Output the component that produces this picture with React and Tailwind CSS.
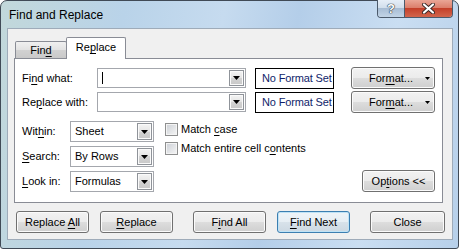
import React from "react";

const font = { fontFamily: '"Liberation Sans", Arial, sans-serif' };

const btn =
  "flex h-[22px] items-center justify-center rounded-[3px] border border-[#707070] bg-[linear-gradient(to_bottom,#f2f2f2_0%,#ebebeb_50%,#dddddd_50%,#cfcfcf_100%)] shadow-[inset_0_0_0_1px_#fbfbfb] text-[11px] text-black";

function U({ children }) {
  return <span className="underline decoration-1 underline-offset-[2px]">{children}</span>;
}

function Arrow() {
  return (
    <svg width="7" height="4" viewBox="0 0 7 4">
      <polygon points="0,0 7,0 3.5,4" fill="#000" />
    </svg>
  );
}

function DropBtn() {
  return (
    <div className="flex w-[15px] items-center justify-center border border-[#8f9399] bg-[linear-gradient(to_bottom,#f4f4f4_0%,#e4e4e4_50%,#d3d3d3_50%,#c8c8c8_100%)] shadow-[inset_0_0_0_1px_#fafafa]">
      <Arrow />
    </div>
  );
}

function Combo({ value }) {
  return (
    <div className="flex h-[21px] w-[84px] border border-[#a4a7ad] bg-white p-px">
      <div className="flex flex-1 items-center pl-[3px] text-[11px]">{value}</div>
      <DropBtn />
    </div>
  );
}

function TextCombo({ caret }) {
  return (
    <div className="flex h-[20px] w-[149px] border border-[#a4a7ad] bg-white p-px">
      <div className="flex flex-1 items-center pl-[3px]">
        {caret && <div className="h-[12px] w-px bg-black" />}
      </div>
      <DropBtn />
    </div>
  );
}

function NoFormat() {
  return (
    <div className="ml-[9px] flex h-[21px] w-[79px] items-center overflow-hidden whitespace-nowrap border border-black bg-white pl-[6px] text-[11px] tracking-[-0.15px] text-[#101e6a]">
      No Format Set
    </div>
  );
}

function FormatBtn() {
  return (
    <div className={btn + " ml-[17px] h-[19px] w-[84px] justify-start pl-[17px]"}>
      <span>
        For<U>m</U>at...
      </span>
      <span className="ml-auto mr-[4px] flex">
        <svg width="5" height="3" viewBox="0 0 5 3">
          <polygon points="0,0 5,0 2.5,3" fill="#000" />
        </svg>
      </span>
    </div>
  );
}

function Check({ children }) {
  return (
    <div className="flex h-[13px] items-center">
      <div className="h-[13px] w-[13px] border border-[#8e8f8f] bg-[linear-gradient(135deg,#cbcfd5_0%,#f6f6f6_100%)] shadow-[inset_0_0_0_1px_#f4f4f4]" />
      <span className="ml-[3px] text-[11px]">{children}</span>
    </div>
  );
}

export default function App() {
  return (
    <div className="h-[249px] w-[459px] overflow-hidden bg-white text-black" style={font}>
      <div className="flex h-[249px] w-[459px] flex-col rounded-t-[7px] rounded-b-[3px] border border-[#404a56] bg-[linear-gradient(100deg,#c2d8da_0%,#b9d3e9_25%,#c6dbef_45%,#b4cee9_60%,#cadef2_80%,#b7d0ea_100%)]">
        {/* title bar */}
        <div className="flex h-[27px] items-start">
          <div className="pl-[8px] pt-[7px] text-[12px] leading-[14px]">Find and Replace</div>
          <div className="-mt-px ml-auto mr-[5px] flex h-[18px] overflow-hidden rounded-b-[4px] border border-t-0 border-[#4b5a6b]">
            <div className="flex w-[27px] items-center justify-center border-r border-[#4b5a6b] bg-[linear-gradient(to_bottom,#e6eef7_0%,#d2dfec_45%,#a8bdd4_50%,#c2d4e6_100%)]">
              <span className="text-[13px] font-bold leading-none text-white [text-shadow:0_0_1px_#26323e,0_0_1px_#26323e,0_0_1px_#26323e]">
                ?
              </span>
            </div>
            <div className="flex w-[47px] items-center justify-center bg-[linear-gradient(to_bottom,#eaa696_0%,#dc7f6c_45%,#c4402a_50%,#d2654c_100%)]">
              <svg width="13" height="11" viewBox="0 0 13 11">
                <path d="M2 1.5 L11 9.5 M11 1.5 L2 9.5" stroke="#3a2a28" strokeWidth="4" strokeLinecap="round" />
                <path d="M2 1.5 L11 9.5 M11 1.5 L2 9.5" stroke="#fff" strokeWidth="2.2" strokeLinecap="round" />
              </svg>
            </div>
          </div>
        </div>

        {/* client area */}
        <div className="ml-[6px] h-[212px] w-[446px] border border-[#9eabb9] bg-[#f0f0f0]">
          {/* tabs */}
          <div className="ml-[6px] mt-[8px] flex h-[21px] items-end">
            <div className="ml-px flex h-[17px] w-[52px] items-center justify-center rounded-t-[2px] border border-b-0 border-[#898c95] bg-[linear-gradient(to_bottom,#f0f0f0_0%,#e2e2e2_50%,#d2d2d2_50%,#c9c9c9_100%)] text-[11px]">
              Fin<U>d</U>
            </div>
            <div className="relative z-10 -mb-px -ml-px flex h-[22px] w-[60px] items-center justify-center rounded-t-[2px] border border-b-0 border-[#898c95] bg-white pb-[2px] text-[11px]">
              Re<U>p</U>lace
            </div>
          </div>

          {/* panel */}
          <div className="ml-[6px] h-[145px] w-[429px] border border-[#898c95] bg-white pt-[9px]">
            <div className="flex h-[20px] items-center">
              <div className="w-[82px] pl-[7px] text-[11px]">
                Fi<U>n</U>d what:
              </div>
              <TextCombo caret />
              <NoFormat />
              <FormatBtn />
            </div>
            <div className="mt-[4px] flex h-[20px] items-center">
              <div className="w-[82px] pl-[7px] text-[11px]">
                Re<U>p</U>lace with:
              </div>
              <TextCombo />
              <NoFormat />
              <FormatBtn />
            </div>

            <div className="mt-[9px] flex">
              <div className="flex flex-col gap-[4px]">
                <div className="flex items-center">
                  <div className="w-[55px] pl-[7px] text-[11px]">
                    Wit<U>h</U>in:
                  </div>
                  <Combo value="Sheet" />
                </div>
                <div className="flex items-center">
                  <div className="w-[55px] pl-[7px] text-[11px]">
                    <U>S</U>earch:
                  </div>
                  <Combo value="By Rows" />
                </div>
                <div className="flex items-center">
                  <div className="w-[55px] pl-[7px] text-[11px]">
                    <U>L</U>ook in:
                  </div>
                  <Combo value="Formulas" />
                </div>
              </div>
              <div className="ml-[11px] flex flex-col gap-[6px] pt-[2px]">
                <Check>
                  Match <U>c</U>ase
                </Check>
                <Check>
                  Match entire cell c<U>o</U>ntents
                </Check>
              </div>
              <div className={btn + " ml-auto mr-[7px] w-[73px] self-end"}>
                <span>
                  Op<U>t</U>ions &lt;&lt;
                </span>
              </div>
            </div>
          </div>

          {/* bottom buttons */}
          <div className="ml-[8px] mt-[8px] flex">
            <div className={btn + " w-[73px]"}>
              <span>
                Replace <U>A</U>ll
              </span>
            </div>
            <div className={btn + " ml-[11px] w-[73px]"}>
              <span>
                <U>R</U>eplace
              </span>
            </div>
            <div className={btn + " ml-[20px] w-[73px]"}>
              <span>
                F<U>i</U>nd All
              </span>
            </div>
            <div className="ml-[11px] flex h-[22px] w-[73px] items-center justify-center rounded-[3px] border border-[#3c7fb1] bg-[linear-gradient(to_bottom,#eef4f8_0%,#e6eef4_50%,#d8e2ea_50%,#ccd8e2_100%)] shadow-[inset_0_0_0_1px_#bfe3f6] text-[11px]">
              <span>
                <U>F</U>ind Next
              </span>
            </div>
            <div className={btn + " ml-[20px] w-[75px]"}>
              <span>Close</span>
            </div>
          </div>
        </div>
      </div>
    </div>
  );
}
